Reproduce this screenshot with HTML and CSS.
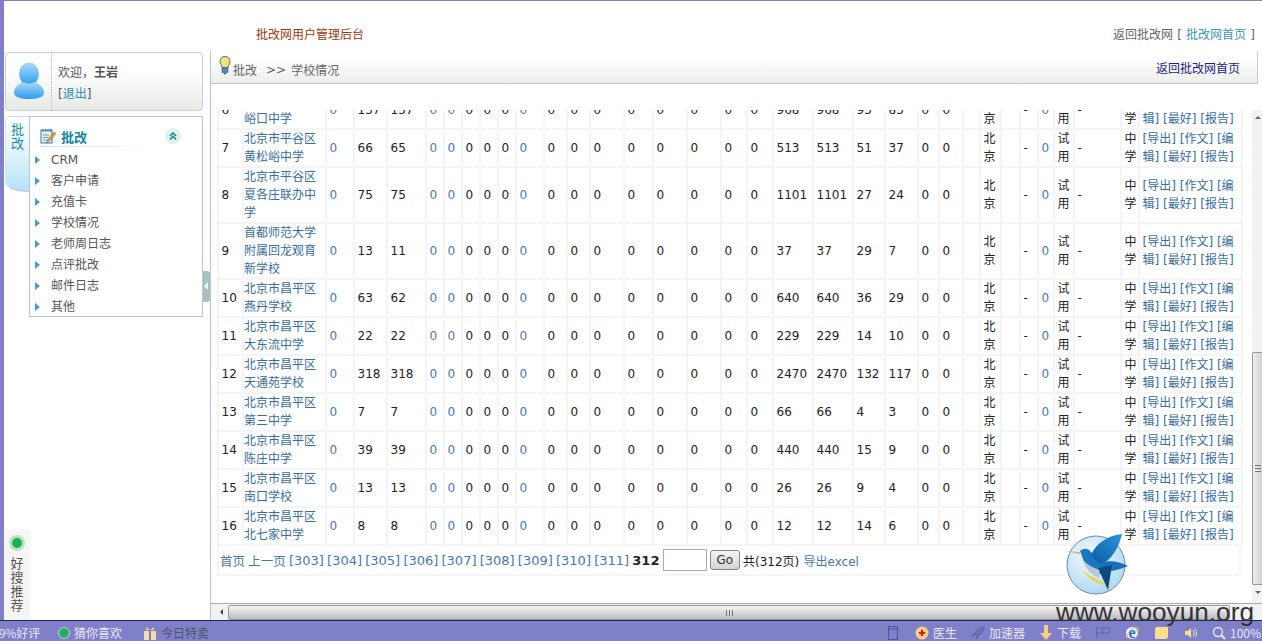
FILE: index.html
```html
<!DOCTYPE html>
<html lang="zh-CN">
<head>
  <meta charset="UTF-8">
  <title>批改网用户管理后台</title>
  <link rel="stylesheet" href="styles.css">
</head>
<body>

  <div class="frame">
    <header class="top">
      <div class="top-title">批改网用户管理后台</div>
      <div class="top-back">返回批改网 [ <a>批改网首页</a> ]</div>
    </header>

    <div class="main">
      <aside class="side">
        <div class="user">
          <svg class="avatar" viewBox="0 0 32 40" width="32" height="40">
            <defs>
              <linearGradient id="ava" x1="0" y1="0" x2="0" y2="1">
                <stop offset="0" stop-color="#a8dcf8"/>
                <stop offset="1" stop-color="#2f9cee"/>
              </linearGradient>
            </defs>
            <ellipse cx="16" cy="12" rx="10" ry="11.5" fill="url(#ava)"/>
            <path d="M1 31c0-6 5-10 10-11 3 2 7 2 10 0 5 1 10 5 10 11 0 4-7 6-15 6S1 35 1 31z" fill="url(#ava)"/>
          </svg>
          <div class="user-text">
            <div>欢迎，<b>王岩</b></div>
            <div class="user-exit">[<a>退出</a>]</div>
          </div>
        </div>

        <nav class="nav">
          <div class="nav-tab">批改</div>
          <div class="nav-box">
            <div class="nav-title">
              <svg viewBox="0 0 16 16" width="16" height="16">
                <rect x="1" y="2" width="11" height="13" fill="#e8f4fa" stroke="#2c78a8"/>
                <path d="M3 1v3M5.500 1v3M8 1v3M10.500 1v3" stroke="#2c78a8"/>
                <path d="M3 7h6M3 9.500h5M3 12h3" stroke="#5a9ac0"/>
                <path d="M7 12l7-8 2 1.500-7 8-2.500 1z" fill="#e8a040" stroke="#805020" stroke-width=".5"/>
              </svg>
              <b>批改</b>
              <span class="nav-fold">
                <svg viewBox="0 0 10 10" width="10" height="10"><path d="M2 5l3-3 3 3M2 8.500l3-3 3 3" fill="none" stroke="#1a8a90" stroke-width="1.600"/></svg>
              </span>
            </div>
            <ul class="nav-list">
              <li>CRM</li>
              <li>客户申请</li>
              <li>充值卡</li>
              <li>学校情况</li>
              <li>老师周日志</li>
              <li>点评批改</li>
              <li>邮件日志</li>
              <li>其他</li>
            </ul>
          </div>
        </nav>

        <div class="haosou">
          <span class="haosou-dot"></span>
          <div class="haosou-text">好搜推荐</div>
        </div>
      </aside>

      <section class="panel">
        <span class="fold-handle"></span>
        <div class="crumb">
          <svg viewBox="0 0 12 19" width="12" height="19">
            <path d="M6 .5C3 .5 1 2.500 1 5.500c0 2.500 2 3.500 2 6h6c0-2.500 2-3.500 2-6 0-3-2-5-5-5z" fill="#f5e27a" stroke="#5a6a70"/>
            <rect x="3" y="11.500" width="6" height="5" fill="#4a8ab8" stroke="#3a5a70" stroke-width=".6"/>
            <path d="M4.500 17h3l-1 1.500h-1z" fill="#3a5a70"/>
          </svg>
          <span class="crumb-a">批改</span>
          <span class="crumb-sep">&gt;&gt;</span>
          <span>学校情况</span>
          <a class="crumb-back">返回批改网首页</a>
        </div>

        <div class="scroll">
          <div class="view">
            <table class="list">
              <colgroup>
                <col class="w25"><col class="w83"><col class="w28"><col class="w33"><col class="w39">
                <col class="w18"><col class="w18"><col class="w18"><col class="w18"><col class="w18"><col class="w28">
                <col class="w23"><col class="w23"><col class="w34"><col class="w29"><col class="w34"><col class="w34"><col class="w26"><col class="w26">
                <col class="w40"><col class="w40"><col class="w32"><col class="w33"><col class="w21"><col class="w24">
                <col class="w17"><col class="w21"><col class="w19"><col class="w18"><col class="w16"><col class="w20"><col class="w47"><col class="w18"><col class="w103">
              </colgroup>
              <tr><td>6</td><td><a>北京市平谷区峪口中学</a></td><td><a>0</a></td><td>157</td><td>157</td><td><a>0</a></td><td><a>0</a></td><td>0</td><td>0</td><td>0</td><td><a>0</a></td><td>0</td><td>0</td><td>0</td><td>0</td><td>0</td><td>0</td><td>0</td><td>0</td><td>968</td><td>968</td><td>95</td><td>85</td><td>0</td><td>0</td><td></td><td>北京</td><td></td><td>-</td><td><a>0</a></td><td>试用</td><td>-</td><td>中学</td><td><a>[导出]</a> <a>[作文]</a> <a>[编辑]</a> <a>[最好]</a> <a>[报告]</a></td></tr>
              <tr><td>7</td><td><a>北京市平谷区黄松峪中学</a></td><td><a>0</a></td><td>66</td><td>65</td><td><a>0</a></td><td><a>0</a></td><td>0</td><td>0</td><td>0</td><td><a>0</a></td><td>0</td><td>0</td><td>0</td><td>0</td><td>0</td><td>0</td><td>0</td><td>0</td><td>513</td><td>513</td><td>51</td><td>37</td><td>0</td><td>0</td><td></td><td>北京</td><td></td><td>-</td><td><a>0</a></td><td>试用</td><td>-</td><td>中学</td><td><a>[导出]</a> <a>[作文]</a> <a>[编辑]</a> <a>[最好]</a> <a>[报告]</a></td></tr>
              <tr><td>8</td><td><a>北京市平谷区夏各庄联办中学</a></td><td><a>0</a></td><td>75</td><td>75</td><td><a>0</a></td><td><a>0</a></td><td>0</td><td>0</td><td>0</td><td><a>0</a></td><td>0</td><td>0</td><td>0</td><td>0</td><td>0</td><td>0</td><td>0</td><td>0</td><td>1101</td><td>1101</td><td>27</td><td>24</td><td>0</td><td>0</td><td></td><td>北京</td><td></td><td>-</td><td><a>0</a></td><td>试用</td><td>-</td><td>中学</td><td><a>[导出]</a> <a>[作文]</a> <a>[编辑]</a> <a>[最好]</a> <a>[报告]</a></td></tr>
              <tr><td>9</td><td><a>首都师范大学附属回龙观育新学校</a></td><td><a>0</a></td><td>13</td><td>11</td><td><a>0</a></td><td><a>0</a></td><td>0</td><td>0</td><td>0</td><td><a>0</a></td><td>0</td><td>0</td><td>0</td><td>0</td><td>0</td><td>0</td><td>0</td><td>0</td><td>37</td><td>37</td><td>29</td><td>7</td><td>0</td><td>0</td><td></td><td>北京</td><td></td><td>-</td><td><a>0</a></td><td>试用</td><td>-</td><td>中学</td><td><a>[导出]</a> <a>[作文]</a> <a>[编辑]</a> <a>[最好]</a> <a>[报告]</a></td></tr>
              <tr><td>10</td><td><a>北京市昌平区燕丹学校</a></td><td><a>0</a></td><td>63</td><td>62</td><td><a>0</a></td><td><a>0</a></td><td>0</td><td>0</td><td>0</td><td><a>0</a></td><td>0</td><td>0</td><td>0</td><td>0</td><td>0</td><td>0</td><td>0</td><td>0</td><td>640</td><td>640</td><td>36</td><td>29</td><td>0</td><td>0</td><td></td><td>北京</td><td></td><td>-</td><td><a>0</a></td><td>试用</td><td>-</td><td>中学</td><td><a>[导出]</a> <a>[作文]</a> <a>[编辑]</a> <a>[最好]</a> <a>[报告]</a></td></tr>
              <tr><td>11</td><td><a>北京市昌平区大东流中学</a></td><td><a>0</a></td><td>22</td><td>22</td><td><a>0</a></td><td><a>0</a></td><td>0</td><td>0</td><td>0</td><td><a>0</a></td><td>0</td><td>0</td><td>0</td><td>0</td><td>0</td><td>0</td><td>0</td><td>0</td><td>229</td><td>229</td><td>14</td><td>10</td><td>0</td><td>0</td><td></td><td>北京</td><td></td><td>-</td><td><a>0</a></td><td>试用</td><td>-</td><td>中学</td><td><a>[导出]</a> <a>[作文]</a> <a>[编辑]</a> <a>[最好]</a> <a>[报告]</a></td></tr>
              <tr><td>12</td><td><a>北京市昌平区天通苑学校</a></td><td><a>0</a></td><td>318</td><td>318</td><td><a>0</a></td><td><a>0</a></td><td>0</td><td>0</td><td>0</td><td><a>0</a></td><td>0</td><td>0</td><td>0</td><td>0</td><td>0</td><td>0</td><td>0</td><td>0</td><td>2470</td><td>2470</td><td>132</td><td>117</td><td>0</td><td>0</td><td></td><td>北京</td><td></td><td>-</td><td><a>0</a></td><td>试用</td><td>-</td><td>中学</td><td><a>[导出]</a> <a>[作文]</a> <a>[编辑]</a> <a>[最好]</a> <a>[报告]</a></td></tr>
              <tr><td>13</td><td><a>北京市昌平区第三中学</a></td><td><a>0</a></td><td>7</td><td>7</td><td><a>0</a></td><td><a>0</a></td><td>0</td><td>0</td><td>0</td><td><a>0</a></td><td>0</td><td>0</td><td>0</td><td>0</td><td>0</td><td>0</td><td>0</td><td>0</td><td>66</td><td>66</td><td>4</td><td>3</td><td>0</td><td>0</td><td></td><td>北京</td><td></td><td>-</td><td><a>0</a></td><td>试用</td><td>-</td><td>中学</td><td><a>[导出]</a> <a>[作文]</a> <a>[编辑]</a> <a>[最好]</a> <a>[报告]</a></td></tr>
              <tr><td>14</td><td><a>北京市昌平区陈庄中学</a></td><td><a>0</a></td><td>39</td><td>39</td><td><a>0</a></td><td><a>0</a></td><td>0</td><td>0</td><td>0</td><td><a>0</a></td><td>0</td><td>0</td><td>0</td><td>0</td><td>0</td><td>0</td><td>0</td><td>0</td><td>440</td><td>440</td><td>15</td><td>9</td><td>0</td><td>0</td><td></td><td>北京</td><td></td><td>-</td><td><a>0</a></td><td>试用</td><td>-</td><td>中学</td><td><a>[导出]</a> <a>[作文]</a> <a>[编辑]</a> <a>[最好]</a> <a>[报告]</a></td></tr>
              <tr><td>15</td><td><a>北京市昌平区南口学校</a></td><td><a>0</a></td><td>13</td><td>13</td><td><a>0</a></td><td><a>0</a></td><td>0</td><td>0</td><td>0</td><td><a>0</a></td><td>0</td><td>0</td><td>0</td><td>0</td><td>0</td><td>0</td><td>0</td><td>0</td><td>26</td><td>26</td><td>9</td><td>4</td><td>0</td><td>0</td><td></td><td>北京</td><td></td><td>-</td><td><a>0</a></td><td>试用</td><td>-</td><td>中学</td><td><a>[导出]</a> <a>[作文]</a> <a>[编辑]</a> <a>[最好]</a> <a>[报告]</a></td></tr>
              <tr><td>16</td><td><a>北京市昌平区北七家中学</a></td><td><a>0</a></td><td>8</td><td>8</td><td><a>0</a></td><td><a>0</a></td><td>0</td><td>0</td><td>0</td><td><a>0</a></td><td>0</td><td>0</td><td>0</td><td>0</td><td>0</td><td>0</td><td>0</td><td>0</td><td>12</td><td>12</td><td>14</td><td>6</td><td>0</td><td>0</td><td></td><td>北京</td><td></td><td>-</td><td><a>0</a></td><td>试用</td><td>-</td><td>中学</td><td><a>[导出]</a> <a>[作文]</a> <a>[编辑]</a> <a>[最好]</a> <a>[报告]</a></td></tr>
            </table>
            <div class="pager">
              <a class="pager-word">首页</a> <a class="pager-word">上一页</a> <a>[303]</a> <a>[304]</a> <a>[305]</a> <a>[306]</a> <a>[307]</a> <a>[308]</a> <a>[309]</a> <a>[310]</a> <a>[311]</a>
              <b>312</b>
              <input class="pager-input" type="text">
              <button class="pager-go">Go</button>
              <span class="pager-small">共(312页)</span>
              <a class="pager-small pager-excel">导出excel</a>
            </div>
          </div>
          <div class="vbar">
            <span class="vbar-up"></span>
            <div class="vbar-thumb"><span></span></div>
            <span class="vbar-down"></span>
          </div>
        </div>

        <div class="hbar">
          <span class="hbar-left"></span>
          <div class="hbar-thumb"><span></span></div>
        </div>
      </section>
    </div>
  </div>

  <footer class="status">
    <span class="st-cut">99%好评</span>
    <span class="st-item st-guess">
      <svg viewBox="0 0 12 12" width="12" height="12"><circle cx="6" cy="6" r="5.500" fill="#2fa860" stroke="#b8d8e8"/></svg>
      猜你喜欢
    </span>
    <span class="st-item st-sale">
      <svg viewBox="0 0 14 14" width="14" height="14"><rect x="1" y="5" width="12" height="9" fill="#f4dca8"/><rect x="6" y="5" width="2" height="9" fill="#8080c8"/><path d="M3 1l4 3 4-3v3H3z" fill="#f0c888"/></svg>
      今日特卖
    </span>

    <span class="st-item st-phone">
      <svg viewBox="0 0 10 14" width="10" height="14"><rect x=".5" y=".5" width="9" height="13" fill="none" stroke="#5050a0"/><path d="M1 3h8" stroke="#5050a0"/></svg>
    </span>
    <span class="st-item st-doctor">
      <svg viewBox="0 0 14 14" width="14" height="14"><circle cx="7" cy="7" r="6.500" fill="#f8d080"/><path d="M7 4v6M4 7h6" stroke="#d02020" stroke-width="2.200"/></svg>
      医生
    </span>
    <span class="st-item st-boost">
      <svg viewBox="0 0 14 14" width="14" height="14"><path d="M13 1C9 1 5 4 4 8l2 2c4-1 7-5 7-9zM4 8L1 9l1 1zM6 10l-1 3 1.500-1zM3 11l-2 2" fill="#7070b0" stroke="#5a5aa0" stroke-width=".7"/></svg>
      加速器
    </span>
    <span class="st-item st-down">
      <svg viewBox="0 0 12 15" width="12" height="15"><path d="M4 0h4v8h4l-6 7-6-7h4z" fill="#f8d080"/></svg>
      下载
    </span>
    <span class="st-item st-flag">
      <svg viewBox="0 0 14 11" width="14" height="11"><path d="M.5 10.500V1h6v5h-6M6.500 1h7v5h-7" fill="none" stroke="#6060a8"/></svg>
    </span>
    <span class="st-item st-ie">
      <svg viewBox="0 0 14 14" width="14" height="14"><circle cx="7" cy="7" r="6" fill="#e8f0fa"/><text x="7" y="11.500" text-anchor="middle" class="ie-letter">e</text><path d="M1 12C3 4 10 0 13 2c1 1 0 3-1 4" fill="none" stroke="#f0c040"/></svg>
    </span>
    <span class="st-item st-folder">
      <svg viewBox="0 0 15 14" width="15" height="14"><path d="M3 1h11v9c0 2-1 3-3 3H1V4c0-2 1-3 2-3z" fill="#f8e090"/></svg>
    </span>
    <span class="st-item st-sound">
      <svg viewBox="0 0 14 14" width="14" height="14"><path d="M1 5h3l3-3v10L4 9H1z" fill="#f8e090"/><path d="M9 4c1.500 2 1.500 4 0 6M11 2.500c2 3 2 6 0 9" fill="none" stroke="#f0e8d0"/></svg>
    </span>
    <span class="st-item st-zoom">
      <svg viewBox="0 0 14 14" width="14" height="14"><circle cx="6" cy="6" r="4.500" fill="none" stroke="#e8e8f0" stroke-width="1.400"/><path d="M9 9l4 4" stroke="#e8e8f0" stroke-width="2"/></svg>
      100%
    </span>
  </footer>

  <svg class="bird" viewBox="1060 525 75 75" width="75" height="75">
    <defs>
      <radialGradient id="disc" cx=".4" cy=".35" r=".75">
        <stop offset="0" stop-color="#f4fbff"/>
        <stop offset="1" stop-color="#a8d4f0"/>
      </radialGradient>
      <linearGradient id="wing" x1="0" y1="1" x2="1" y2="0">
        <stop offset="0" stop-color="#0c5aa0"/>
        <stop offset="1" stop-color="#2a94dc"/>
      </linearGradient>
    </defs>
    <circle cx="1096" cy="565" r="29" fill="url(#disc)" stroke="#6a8aa0" stroke-width="1"/>
    <path d="M1065 551l15 1 0 2z" fill="#d8b070"/>
    <path d="M1080 551c3-3 8-3 10 0 4 4 6 8 11 9l2 12-4 3c-8-3-15-9-16-16z" fill="#1a78c0"/>
    <path d="M1083 560c5 5 10 8 17 10l-1 8c-7-3-14-9-16-18z" fill="#b8c8d8"/>
    <path d="M1082 570c6 8 12 12 22 15l1-2c-9-3-16-8-23-13z" fill="#e8d840"/>
    <path d="M1122 534c-13 1-26 9-31 21l9 10c12-5 19-18 22-31z" fill="url(#wing)"/>
    <path d="M1128 566c-9-5-20-6-28-3l3 8c9 1 18-2 25-5z" fill="#1a70b8"/>
    <path d="M1098 568l10 22 4-25z" fill="#0c4a80"/>
  </svg>
  <div class="mark">www.wooyun.org</div>

</body>
</html>
```

FILE: styles.css
```css
* {
  box-sizing: border-box;
}

html, body {
  height: 100%;
}

body {
  margin: 0;
  overflow: hidden;
  display: flex;
  flex-direction: column;
  background-color: #8080c8;
  font-family: "DejaVu Sans", "Noto Sans CJK SC", sans-serif;
  font-size: 12px;
  color: #222;
}

a {
  color: #3f6f9f;
}

.frame {
  flex: 1;
  min-height: 0;
  margin: 1px 0 0 4px;
  display: flex;
  flex-direction: column;
  background-color: #fff;
}

/* top */
.top {
  height: 50px;
  flex: none;
  display: flex;
  justify-content: space-between;
  padding: 26px 7px 0 252px;
  line-height: 17px;
}

.top-title {
  color: #9a3a10;
}

.top-back {
  color: #666;
  word-spacing: .4px;
}

.top-back a {
  color: #3f94b4;
}

.main {
  flex: 1;
  min-height: 0;
  display: flex;
}

/* left column */
.side {
  width: 199px;
  flex: none;
  padding: 1px 0 0 1px;
  display: flex;
  flex-direction: column;
}

.user {
  height: 59px;
  flex: none;
  display: flex;
  align-items: center;
  border: 1px solid #c8cece;
  border-radius: 4px;
  background: linear-gradient(#fff, #fff 30%, #e6e9e6);
}

.avatar {
  margin-left: 7px;
  flex: none;
}

.user-text {
  margin-left: 6px;
  padding-left: 6px;
  height: 100%;
  flex: 1;
  border-left: 1px dotted #b8b8b8;
  line-height: 21px;
  padding-top: 10px;
  color: #555;
}

.user-exit a {
  color: #2a8fb0;
}

.nav {
  height: 201px;
  flex: none;
  margin-top: 5px;
  display: flex;
}

.nav-tab {
  width: 24px;
  height: 76px;
  flex: none;
  padding: 6px 0 0 5px;
  font-size: 13px;
  line-height: 14px;
  color: #1d8a9e;
  background: linear-gradient(#fff, #dff3fb 50%, #b4e2f8);
  border-left: 1px solid #d8e4e8;
  border-top: 1px solid #d0dcdc;
  border-radius: 4px 0 0 0;
  border-bottom-left-radius: 24px 10px;
  border-bottom: 1px solid #b8c8cc;
}

.nav-box {
  flex: 1;
  border: 1px solid #b8c6c6;
  padding-left: 10px;
}

.nav-title {
  height: 21px;
  margin: 9px 20px 3px 0;
  display: flex;
  align-items: center;
  gap: 5px;
  font-size: 13px;
  color: #14879e;
  border-bottom: 1px solid;
  border-image: linear-gradient(to right, #c8dde4, #fff 80%) 1;
  position: relative;
}

.nav-fold {
  position: absolute;
  right: 1px;
  top: 2px;
  width: 16px;
  height: 16px;
  border-radius: 50%;
  background-color: #dff2ea;
  display: flex;
  align-items: center;
  justify-content: center;
}

.nav-list {
  list-style: none;
  margin: 0 0 0 -5px;
  padding: 0;
  color: #555;
}

.nav-list li {
  height: 21px;
  line-height: 21px;
  padding-left: 16px;
  position: relative;
}

.nav-list li::before {
  content: "";
  position: absolute;
  left: 0;
  top: 6px;
  border-left: 5px solid #4a9ccc;
  border-top: 4px solid transparent;
  border-bottom: 4px solid transparent;
}

.haosou {
  width: 26px;
  height: 90px;
  flex: none;
  margin: auto 0 0 -1px;
  background-color: #f5f6f5;
  display: flex;
  flex-direction: column;
  align-items: center;
  padding-top: 5px;
}

.haosou-dot {
  width: 10px;
  height: 10px;
  border-radius: 50%;
  background-color: #22ac50;
  border: 3px solid #b4e8c4;
  box-sizing: content-box;
  flex: none;
}

.haosou-text {
  width: 13px;
  margin-top: 6px;
  line-height: 14px;
  font-size: 13px;
  color: #555;
}

/* right panel */
.panel {
  flex: 1;
  min-width: 0;
  margin-left: 7px;
  display: flex;
  flex-direction: column;
  border-left: 1px solid #bcc4c4;
  position: relative;
}

.fold-handle {
  position: absolute;
  left: -8px;
  top: 220px;
  width: 7px;
  height: 31px;
  background-color: #a8c0c0;
  border-radius: 0 3px 3px 0;
}

.fold-handle::after {
  content: "";
  position: absolute;
  left: 1px;
  top: 11px;
  border-right: 4px solid #f0f8f8;
  border-top: 4px solid transparent;
  border-bottom: 4px solid transparent;
}

.crumb {
  height: 33px;
  flex: none;
  margin-right: 4px;
  padding: 5px 17px 0 8px;
  display: flex;
  align-items: center;
  color: #666;
  background: linear-gradient(#fff, #fff 20%, #eceeec);
  border-bottom: 1px solid #bcc8c8;
  border-right: 1px solid #c8d0d0;
}

.crumb svg {
  margin-top: -9px;
  flex: none;
}

.crumb-a {
  margin-left: 2px;
}

.crumb-sep {
  margin: 0 5px 0 9px;
}

.crumb-back {
  margin: -4px 0 0 auto;
  color: #1c1c80;
}

.scroll {
  flex: 1;
  min-height: 0;
  margin-top: 26px;
  display: flex;
}

.view {
  flex: 1;
  min-width: 0;
  overflow: hidden;
  padding-left: 6px;
}

.list {
  table-layout: fixed;
  width: 1024px;
  border-collapse: collapse;
  margin-top: -20px;
  line-height: 18px;
}

.list td {
  border: 2px solid #f4f5f6;
  padding: 0 2px 0 2.500px;
  overflow: hidden;
}

.list td:nth-child(2) {
  padding-left: 0;
}

.list td a {
  color: #4a78b0;
}

.list td:nth-child(2) a,
.list td:last-child a {
  color: #3a6c9c;
}

.w16 { width: 16px; }
.w17 { width: 17px; }
.w18 { width: 18px; }
.w19 { width: 19px; }
.w20 { width: 20px; }
.w21 { width: 21px; }
.w23 { width: 23px; }
.w24 { width: 24px; }
.w25 { width: 25px; }
.w26 { width: 26px; }
.w28 { width: 28px; }
.w29 { width: 29px; }
.w32 { width: 32px; }
.w33 { width: 33px; }
.w34 { width: 34px; }
.w39 { width: 39px; }
.w40 { width: 40px; }
.w47 { width: 47px; }
.w83 { width: 83px; }
.w103 { width: 103px; }

.pager {
  width: 1024px;
  height: 30px;
  padding-left: 1px;
  display: flex;
  align-items: center;
  gap: 3.200px;
  font-size: 13px;
  border-bottom: 2px solid #f4f5f6;
  border-right: 2px solid #f4f5f6;
  border-left: 2px solid #f4f5f6;
}

.pager a {
  color: #4a78a4;
}

.pager b {
  color: #222;
}

.pager-word {
  font-size: 12.500px;
}

.pager-small {
  font-size: 12px;
}

.pager-excel {
  margin-left: 1px;
}

.pager-input {
  width: 44px;
  height: 22px;
  border: 1px solid #aaa;
  background-color: #fff;
}

.pager-go {
  width: 30px;
  height: 20px;
  padding: 0;
  font: inherit;
  font-size: 12px;
  color: #333;
  border: 1px solid #888;
  border-radius: 3px;
  background: linear-gradient(#f4f4f4, #d4d4d4);
}

/* fake scrollbars */
.vbar {
  width: 10px;
  flex: none;
  display: flex;
  flex-direction: column;
  background-color: #f2f2f2;
}

.vbar-up,
.vbar-down {
  flex: none;
  position: relative;
}

.vbar-up {
  height: 13px;
}

.vbar-down {
  height: 18px;
}

.vbar-up::after,
.vbar-down::after {
  content: "";
  position: absolute;
  left: 3px;
  top: 6px;
  border-left: 3px solid transparent;
  border-right: 3px solid transparent;
}

.vbar-up::after {
  border-bottom: 3px solid #666;
}

.vbar-down::after {
  border-top: 3px solid #666;
}

.vbar-thumb {
  margin-top: auto;
  height: 233px;
  display: flex;
  align-items: center;
  justify-content: center;
  border: 1px solid #999;
  border-right: none;
  border-radius: 2px 0 0 2px;
  background: linear-gradient(to right, #eee, #d2d2d2);
}

.vbar-thumb span {
  width: 6px;
  height: 7px;
  border-top: 1px solid #777;
  border-bottom: 1px solid #777;
  background: linear-gradient(#777, #777) center / 100% 1px no-repeat;
}

.hbar {
  height: 17px;
  flex: none;
  display: flex;
  padding-left: 6px;
  background-color: #f2f2f2;
  border-top: 1px solid #aaa;
}

.hbar-left {
  width: 11px;
  flex: none;
  position: relative;
}

.hbar-left::after {
  content: "";
  position: absolute;
  left: 3px;
  top: 5px;
  border-right: 3px solid #444;
  border-top: 3px solid transparent;
  border-bottom: 3px solid transparent;
}

.hbar-thumb {
  width: 1002px;
  margin-top: 1px;
  display: flex;
  align-items: center;
  justify-content: center;
  border: 1px solid #999;
  border-radius: 2px;
  background: linear-gradient(#f6f6f6, #bcbcbc);
}

.hbar-thumb span {
  width: 7px;
  height: 6px;
  border-left: 1px solid #777;
  border-right: 1px solid #777;
  background: linear-gradient(#777, #777) center / 1px 100% no-repeat;
}

/* browser status bar */
.status {
  height: 21px;
  flex: none;
  display: flex;
  align-items: center;
  position: relative;
  padding-top: 3px;
  border-top: 1px solid #20205c;
  background-color: #8080c8;
  color: #e8e8f4;
  white-space: nowrap;
  font-family: "Noto Sans CJK SC", "DejaVu Sans", sans-serif;
}

.st-item {
  display: flex;
  align-items: center;
  gap: 4px;
  flex: none;
}

.st-cut {
  margin-left: -8px;
  width: 47px;
}

.st-guess { margin-left: 19px; }
.st-sale { margin-left: 21px; color: #50506c; }
.st-phone { margin-left: auto; }
.st-doctor { margin-left: 17px; }
.st-boost { margin-left: 14px; }
.st-down { margin-left: 15px; gap: 5px; }
.st-flag { margin-left: 15px; }
.st-ie { margin-left: 15px; }
.st-folder { margin-left: 15px; }
.st-sound { margin-left: 15px; }
.st-zoom { margin-left: 14px; width: 50px; }

.ie-letter {
  font-family: "Liberation Serif", serif;
  font-size: 16px;
  font-weight: bold;
  fill: #1f6fd8;
}

/* things lying on top of the page */
.bird {
  position: absolute;
  left: 1060px;
  top: 525px;
}

.mark {
  position: absolute;
  left: 1056px;
  top: 597px;
  font-family: "Liberation Sans", sans-serif;
  font-size: 26.200px;
  line-height: 30px;
  color: #333;
}
```
